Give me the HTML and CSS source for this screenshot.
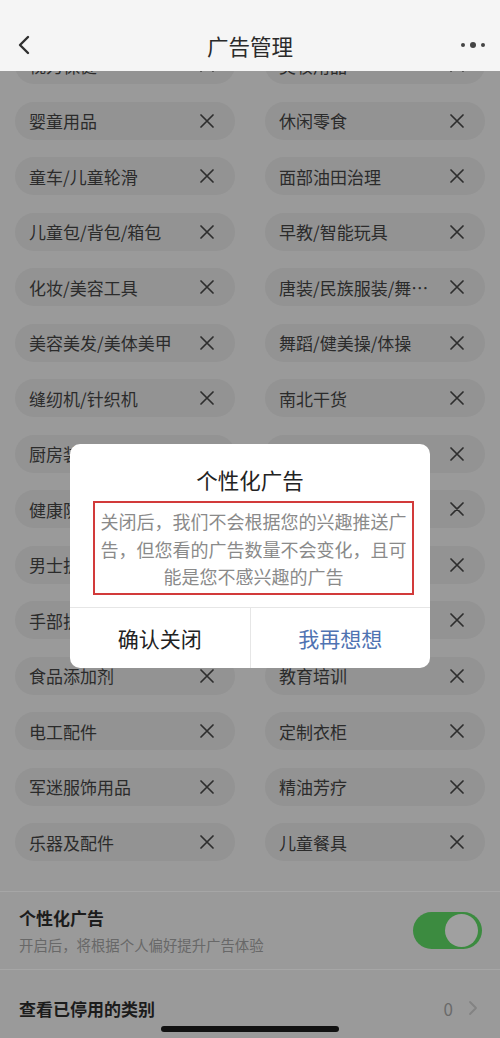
FILE: index.html
```html
<!DOCTYPE html>
<html lang="zh">
<head>
    <meta charset="UTF-8">
    <meta name="viewport" content="width=device-width, initial-scale=1.0">
    <title>广告管理</title>
    <link rel="stylesheet" href="styles.css">
</head>
<body>
    <div class="topbar">
        <div class="back">
            <svg width="14" height="20" viewBox="0 0 14 20"><path d="M11 2 L3 10 L11 18" fill="none" stroke="#2f2f2f" stroke-width="2.4" stroke-linecap="round" stroke-linejoin="round"/></svg>
        </div>
        <div class="title">广告管理</div>
        <div class="more">
            <svg width="26" height="8" viewBox="0 0 26 8"><circle cx="3" cy="4" r="2" fill="#444"/><circle cx="13" cy="4" r="3" fill="#444"/><circle cx="23" cy="4" r="2" fill="#444"/></svg>
        </div>
    </div>

    <div class="tags" id="tags"></div>

    <div class="settings">
        <div class="row-switch">
            <div class="info">
                <div class="info-title">个性化广告</div>
                <div class="info-sub">开启后，将根据个人偏好提升广告体验</div>
            </div>
            <div class="switch"><div class="knob"></div></div>
        </div>
        <div class="row-link">
            <div class="link-title">查看已停用的类别</div>
            <div class="count">0</div>
            <svg class="chev" width="10" height="16" viewBox="0 0 10 16"><path d="M2 2 L8 8 L2 14" fill="none" stroke="#838383" stroke-width="1.8" stroke-linecap="round" stroke-linejoin="round"/></svg>
        </div>
    </div>

    <div class="dialog">
        <div class="dialog-title">个性化广告</div>
        <div class="dialog-msg">关闭后，我们不会根据您的兴趣推送广告，但您看的广告数量不会变化，且可能是您不感兴趣的广告</div>
        <div class="dialog-actions">
            <button class="btn-close">确认关闭</button>
            <button class="btn-think">我再想想</button>
        </div>
    </div>

    <div class="home-bar"></div>

    <script>
        // category chips, two per row
        let cats = [
            '视力保健', '美妆用品',
            '婴童用品', '休闲零食',
            '童车/儿童轮滑', '面部油田治理',
            '儿童包/背包/箱包', '早教/智能玩具',
            '化妆/美容工具', '唐装/民族服装/舞蹈服',
            '美容美发/美体美甲', '舞蹈/健美操/体操',
            '缝纫机/针织机', '南北干货',
            '厨房装饰用品', '家居饰品',
            '健康防护', '宠物用品',
            '男士护理', '户外装备',
            '手部护理', '母婴护理',
            '食品添加剂', '教育培训',
            '电工配件', '定制衣柜',
            '军迷服饰用品', '精油芳疗',
            '乐器及配件', '儿童餐具'
        ]

        let x = '<svg width="14" height="14" viewBox="0 0 14 14"><path d="M1 1 L13 13 M13 1 L1 13" stroke="#2e2e2e" stroke-width="1.7" stroke-linecap="round"/></svg>'

        for (const name of cats) {
            document.getElementById('tags').innerHTML +=
                `<div class="tag"><span>${name}</span>${x}</div>`
        }
    </script>
</body>
</html>
```

FILE: styles.css
```css
body{
    margin: 0;
    width: 500px;
    height: 1038px;
    background-color: #9a9a9a;
    font-family: "Noto Sans CJK SC", "Noto Sans", sans-serif;
    position: relative;
    overflow: hidden;
}
.topbar{
    position: absolute;
    top: 0;
    left: 0;
    right: 0;
    height: 71px;
    box-sizing: border-box;
    padding-top: 19px;
    background-color: #f5f5f5;
    display: flex;
    align-items: center;
    z-index: 2;
}
.back{
    width: 60px;
    padding-left: 17px;
    box-sizing: border-box;
    display: flex;
    align-items: center;
}
.title{
    flex: 1;
    text-align: center;
    font-size: 21.5px;
    color: #2a2a2a;
}
.more{
    width: 60px;
    padding-left: 20px;
    box-sizing: border-box;
    display: flex;
    align-items: center;
}
.tags{
    display: grid;
    grid-template-columns: minmax(0, 1fr) minmax(0, 1fr);
    column-gap: 30px;
    row-gap: 17.5px;
    padding: 46px 15px 0 15px;
}
.tag{
    height: 38px;
    border-radius: 19px;
    background-color: #939393;
    display: flex;
    align-items: center;
    padding: 0 21px 0 14px;
    min-width: 0;
}
.tag span{
    flex: 1;
    min-width: 0;
    margin-right: 10px;
    white-space: nowrap;
    overflow: hidden;
    text-overflow: ellipsis;
    font-size: 17px;
    color: #2b2b2b;
}
.tag svg{
    flex-shrink: 0;
}
.settings{
    margin-top: 30px;
    border-top: 1px solid #a6a6a6;
}
.row-switch{
    height: 77px;
    display: flex;
    align-items: center;
    padding: 0 18px 0 19px;
    border-bottom: 1px solid #a6a6a6;
}
.info{
    flex: 1;
}
.info-title{
    font-size: 17px;
    font-weight: bold;
    color: #1c1c1c;
    line-height: 26px;
}
.info-sub{
    font-size: 14.4px;
    color: #686868;
    line-height: 24px;
    margin-top: 2px;
}
.switch{
    width: 69px;
    height: 37px;
    border-radius: 19px;
    background-color: #3c8b40;
    display: flex;
    align-items: center;
    justify-content: flex-end;
    padding-right: 4px;
    box-sizing: border-box;
}
.knob{
    width: 33px;
    height: 33px;
    border-radius: 50%;
    background-color: #a0a0a0;
}
.row-link{
    height: 76px;
    display: flex;
    align-items: center;
    padding: 0 22px 0 19px;
}
.link-title{
    flex: 1;
    font-size: 17px;
    font-weight: bold;
    color: #1c1c1c;
}
.count{
    font-size: 17px;
    color: #6a6a6a;
    margin-right: 15px;
}
.dialog{
    position: absolute;
    left: 70px;
    top: 444px;
    width: 360px;
    background-color: #ffffff;
    border-radius: 10px;
    z-index: 3;
}
.dialog-title{
    text-align: center;
    font-size: 21.5px;
    color: #222222;
    padding-top: 21px;
    line-height: 30px;
}
.dialog-msg{
    margin: 6px 16px 0 23px;
    border: 2px solid #d23a3a;
    padding: 5px 0 2px 0;
    text-align: center;
    font-size: 18px;
    line-height: 27.5px;
    color: #8a8a8a;
}
.dialog-actions{
    margin-top: 12px;
    border-top: 1px solid #e6e6e6;
    display: flex;
}
.dialog-actions button{
    flex: 1;
    height: 60px;
    border: none;
    background: none;
    font-family: "Noto Sans CJK SC", "Noto Sans", sans-serif;
    font-size: 21px;
    padding: 0;
    outline: none;
}
.btn-close{
    color: #222222;
    border-right: 1px solid #e6e6e6 !important;
}
.btn-think{
    color: #4f73b2;
}
.home-bar{
    position: absolute;
    left: 161px;
    bottom: 6px;
    width: 178px;
    height: 6px;
    border-radius: 3px;
    background-color: #111111;
}
```
